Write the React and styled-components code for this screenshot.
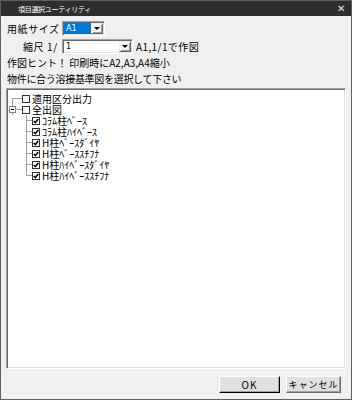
import React from 'react'
import styled, { createGlobalStyle } from 'styled-components'

const GlobalStyle = createGlobalStyle`
  html, body {
    margin: 0;
    padding: 0;
    background: #f0f0f0;
  }
  * {
    box-sizing: border-box;
  }
`

const Window = styled.div`
  width: 352px;
  height: 400px;
  display: flex;
  flex-direction: column;
  border: 1px solid #5f5f5f;
  background: #f0f0f0;
  font-family: "Noto Sans CJK JP", "DejaVu Sans", sans-serif;
  font-size: 10px;
  color: #000;
`

const TitleBar = styled.div`
  height: 15px;
  flex: none;
  display: flex;
  align-items: center;
  justify-content: space-between;
  background: #2e2e2e;
  color: #ffffff;
  padding: 0 6px 0 17px;
  font-size: 7px;
  letter-spacing: -0.3px;
`

const CloseX = styled.span`
  font-family: "DejaVu Sans", sans-serif;
  font-size: 10px;
  color: #e8e8e8;
  line-height: 1;
`

const Body = styled.div`
  flex: 1;
  display: flex;
  flex-direction: column;
  padding: 5px 5px 0 5px;
  min-height: 0;
`

const Row = styled.div`
  display: flex;
  align-items: center;
  height: 15px;
  margin-top: ${p => p.gap || 0}px;
  padding-left: ${p => p.indent || 0}px;
`

const Label = styled.span`
  width: ${p => p.w}px;
  flex: none;
  white-space: nowrap;
  letter-spacing: 0.6px;
  padding-left: 1px;
`

const Text = styled.div`
  height: 16px;
  line-height: 16px;
  padding-left: 1px;
  margin-top: ${p => p.gap || 0}px;
  white-space: nowrap;
  letter-spacing: ${p => p.ls || 0}px;
`

const Select = styled.div`
  width: ${p => p.w}px;
  height: 15px;
  flex: none;
  display: flex;
  background: #fff;
  border-top: 1px solid #a0a0a0;
  border-left: 1px solid #a0a0a0;
  border-right: 1px solid #ffffff;
  border-bottom: 1px solid #ffffff;
  box-shadow: inset 1px 1px 0 #696969, inset -1px -1px 0 #e3e3e3;
  padding: 1px;
`

const SelectValue = styled.div`
  flex: 1;
  display: flex;
  align-items: center;
  padding-left: 2px;
  font-family: "DejaVu Sans", sans-serif;
  font-size: 8px;
  background: ${p => (p.selected ? '#0078d7' : '#fff')};
  color: ${p => (p.selected ? '#fff' : '#000')};
`

const DropBtn = styled.div`
  width: 12px;
  flex: none;
  display: flex;
  align-items: center;
  justify-content: center;
  background: #f0f0f0;
  border-top: 1px solid #f0f0f0;
  border-left: 1px solid #f0f0f0;
  border-right: 1px solid #696969;
  border-bottom: 1px solid #696969;
  box-shadow: inset 1px 1px 0 #fff, inset -1px -1px 0 #a0a0a0;
`

const Arrow = styled.span`
  width: 0;
  height: 0;
  border-left: 3px solid transparent;
  border-right: 3px solid transparent;
  border-top: 3px solid #000;
`

const After = styled.span`
  margin-left: 3px;
  white-space: nowrap;
  letter-spacing: 0.4px;
`

const TreeBox = styled.div`
  flex: 1;
  margin-top: 1px;
  background: #fff;
  border-top: 1px solid #a0a0a0;
  border-left: 1px solid #a0a0a0;
  border-right: 1px solid #ffffff;
  border-bottom: 1px solid #ffffff;
  box-shadow: inset 1px 1px 0 #696969, inset -1px -1px 0 #e3e3e3;
  padding: 4px 0 0 0;
`

const TreeRowBox = styled.div`
  display: flex;
  align-items: center;
  height: 11px;
`

const Gutter = styled.svg`
  flex: none;
  display: block;
`

const Check = styled.span`
  width: 8px;
  height: 8px;
  flex: none;
  display: flex;
  align-items: center;
  justify-content: center;
  border: 1px solid #333;
  background: #fff;
`

const ItemText = styled.span`
  margin-left: 2px;
  white-space: nowrap;
  line-height: 11px;
  height: 11px;
  font-size: ${p => p.size}px;
  letter-spacing: ${p => p.ls || 0}px;
`

const Footer = styled.div`
  height: 30px;
  flex: none;
  display: flex;
  align-items: flex-start;
  justify-content: flex-end;
  gap: 6px;
  padding: 7px 5px 0 0;
`

const Button = styled.button`
  width: ${p => p.w}px;
  height: 17px;
  padding: 0;
  background: #e1e1e1;
  font-family: "Noto Sans CJK JP", "DejaVu Sans", sans-serif;
  font-size: ${p => p.size || 10}px;
  color: #000;
  letter-spacing: ${p => p.ls || 0}px;
  white-space: nowrap;
  border-top: 1px solid #ffffff;
  border-left: 1px solid #ffffff;
  border-right: 1px solid ${p => (p.primary ? '#000' : '#696969')};
  border-bottom: 1px solid ${p => (p.primary ? '#000' : '#696969')};
  box-shadow: inset -1px -1px 0 #a0a0a0;
`

const LINE = '#a0a0a0'

const TreeGutter = ({ kind }) => {
  if (kind === 'first') {
    return (
      <Gutter width="15" height="11">
        <path d="M5.5 5.5 H15 M5.5 5.5 V11" stroke={LINE} fill="none" />
      </Gutter>
    )
  }
  if (kind === 'parent') {
    return (
      <Gutter width="15" height="11">
        <path d="M5.5 0 V2" stroke={LINE} fill="none" />
        <rect x="2.5" y="2.5" width="6" height="6" stroke="#808080" fill="#fff" />
        <path d="M4 5.5 H7" stroke="#000" />
        <path d="M8.5 5.5 H15 M5.5 8.5 V11" stroke={LINE} fill="none" />
      </Gutter>
    )
  }
  const last = kind === 'last'
  return (
    <Gutter width="25" height="11">
      <path d={`M19.5 0 V${last ? 5.5 : 11} M19.5 5.5 H25`} stroke={LINE} fill="none" />
    </Gutter>
  )
}

const Tick = () => (
  <svg width="6" height="6" viewBox="0 0 6 6">
    <path d="M0.7 3 L2.3 4.6 L5.3 1" stroke="#000" strokeWidth="1.5" fill="none" />
  </svg>
)

const TreeRow = ({ kind, checked, label, ls, size }) => (
  <TreeRowBox>
    <TreeGutter kind={kind} />
    <Check>{checked && <Tick />}</Check>
    <ItemText ls={ls} size={size}>{label}</ItemText>
  </TreeRowBox>
)

const children = [
  'ｺﾗﾑ柱ﾍﾞｰｽ',
  'ｺﾗﾑ柱ﾊｲﾍﾞｰｽ',
  'H柱ﾍﾞｰｽﾀﾞｲﾔ',
  'H柱ﾍﾞｰｽｽﾁﾌﾅ',
  'H柱ﾊｲﾍﾞｰｽﾀﾞｲﾔ',
  'H柱ﾊｲﾍﾞｰｽｽﾁﾌﾅ'
]

const App = () => (
  <>
    <GlobalStyle />
    <Window>
      <TitleBar>
        <span>項目選択ユーティリティ</span>
        <CloseX>✕</CloseX>
      </TitleBar>
      <Body>
        <Row>
          <Label w={56}>用紙サイズ</Label>
          <Select w={43}>
            <SelectValue selected>A1</SelectValue>
            <DropBtn><Arrow /></DropBtn>
          </Select>
        </Row>
        <Row gap={3} indent={16}>
          <Label w={40}>縮尺 1/</Label>
          <Select w={71}>
            <SelectValue>1</SelectValue>
            <DropBtn><Arrow /></DropBtn>
          </Select>
          <After>A1,1/1で作図</After>
        </Row>
        <Text gap={1}>作図ヒント！ 印刷時にA2,A3,A4縮小</Text>
        <Text ls={-0.3}>物件に合う溶接基準図を選択して下さい</Text>
        <TreeBox>
          <TreeRow kind="first" label="適用区分出力" size={10} />
          <TreeRow kind="parent" label="全出図" size={10} />
          {children.map((name, i) => (
            <TreeRow
              key={name}
              kind={i === children.length - 1 ? 'last' : 'child'}
              checked
              label={name}
              size={10}
            />
          ))}
        </TreeBox>
        <Footer>
          <Button w={61} primary ls={1}>OK</Button>
          <Button w={55} size={9} ls={1}>キャンセル</Button>
        </Footer>
      </Body>
    </Window>
  </>
)

export default App
